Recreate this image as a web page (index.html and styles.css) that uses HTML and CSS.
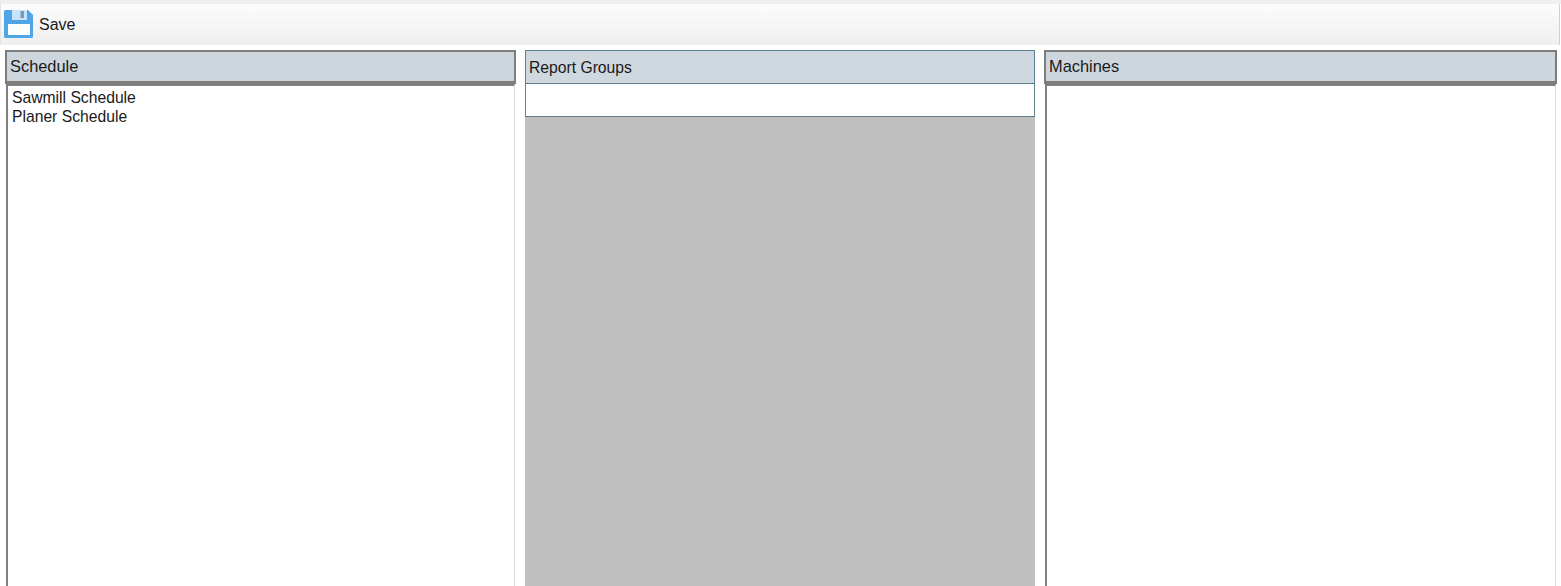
FILE: index.html
```html
<!DOCTYPE html>
<html lang="en">
<head>
<meta charset="utf-8">
<title>Schedule</title>
<link rel="stylesheet" href="styles.css">
</head>
<body>
<div class="app">
  <div class="toolbar">
    <button class="save">
      <svg class="save-icon" width="30" height="30" viewBox="0 0 30 30" aria-hidden="true">
        <path d="M0 2.500A1.500 1.500 0 0 1 1.500 1H24l5 5v21.500a1.500 1.500 0 0 1-1.500 1.500h-26A1.500 1.500 0 0 1 0 27.500z" fill="#4ea6e6"/>
        <rect x="8" y="1" width="15" height="10" fill="#c9e2f6"/>
        <rect x="16.500" y="2" width="3.500" height="7" fill="#6f9cc2"/>
        <rect x="4" y="15" width="22" height="11" fill="#fff"/>
      </svg>
      <span class="save-label">Save</span>
    </button>
  </div>
  <div class="panels">
    <section class="panel">
      <header class="panel-head">Schedule</header>
      <ul class="list">
        <li>Sawmill Schedule</li>
        <li>Planer Schedule</li>
      </ul>
    </section>
    <section class="panel panel-groups">
      <header class="groups-head">Report Groups</header>
      <div class="groups-row"></div>
      <div class="groups-empty"></div>
    </section>
    <section class="panel">
      <header class="panel-head">Machines</header>
      <ul class="list"></ul>
    </section>
  </div>
</div>
</body>
</html>
```
FILE: styles.css
```css
* { box-sizing: border-box; }
html, body { margin: 0; height: 100%; overflow: hidden; background: #fff; }
body { font-family: "Liberation Sans", Arial, sans-serif; font-size: 15.7px; color: #1a1a1a; }
.app { display: flex; flex-direction: column; height: 586px; padding-top: 4px; background: linear-gradient(#efefef 4px, #fff 4px); }
.toolbar { height: 41px; margin-right: 1px; padding: 5px 0 0 3px; background: linear-gradient(#fcfcfc, #efefef); border-right: 1px solid #d0d0d0; border-left: 1px solid #e4e4e4; }
.save { display: flex; align-items: center; gap: 5px; height: 30px; padding: 0; border: 0; background: none; font: inherit; font-size: 16px; color: inherit; }
.save-icon { flex: none; }
.save-label { padding-top: 2px; }
.panels { flex: 1; min-height: 0; display: grid; grid-template-columns: 511px 510px 513px; column-gap: 9px; padding: 5px 0 0 5px; }
.panel { display: flex; flex-direction: column; min-height: 0; }
.panel-head { height: 34px; padding: 4px 0 0 3px; background: #cdd6dd; border: 2px solid #7d7d7d; border-bottom-width: 3px; font-size: 16.4px; line-height: 20px; }
.list { flex: 1; margin: 0 1px; padding: 2px 0 0 4px; list-style: none; background: #fff; border-left: 2px solid #808080; border-top: 2px solid #808080; border-right: 1px solid #dcdcdc; line-height: 19px; }
.panel-groups { background: #bfbfbf; }
.groups-head { height: 34px; padding: 7px 0 0 3px; background: #cfd8df; border: 1px solid #5f808f; line-height: 20px; }
.groups-row { height: 34px; margin-top: -1px; background: #fff; border: 1px solid #5f808f; }
.groups-empty { flex: 1; }
```
